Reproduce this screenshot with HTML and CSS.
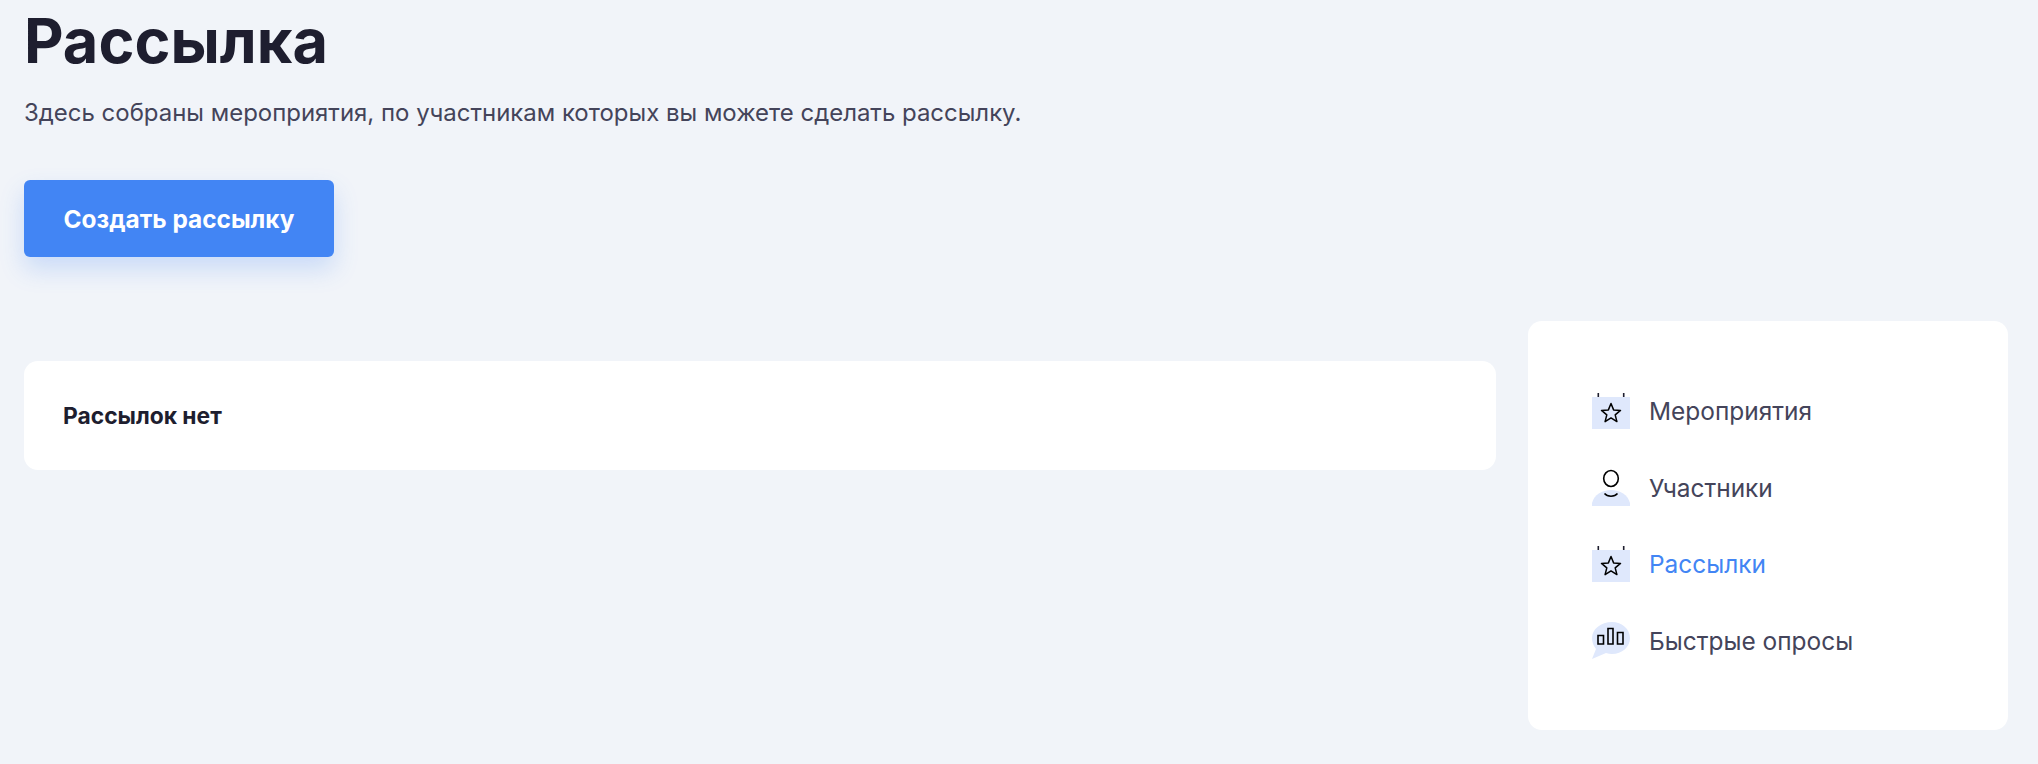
FILE: index.html
```html
<!DOCTYPE html>
<html lang="ru">
<head>
  <meta charset="UTF-8" />
  <title>Рассылка</title>
  <link rel="stylesheet" href="styles.css">
</head>
<body>

  <h1 class="titulo">Рассылка</h1>
  <p class="descripcion">Здесь собраны мероприятия, по участникам которых вы можете сделать рассылку.</p>
  <button class="boton">Создать рассылку</button>

  <div class="columnas">
    <div class="tarjeta">Рассылок нет</div>

    <nav class="menu">
      <a class="enlace">
        <svg class="icono" viewBox="0 0 38 38"><path d="M0 5h38v32H0z" fill="#dfe8fc"/><path d="M6.300 1v4M31.700 1v4" stroke="#1e1e2f" stroke-width="1.600"/><path d="M19 11.500l2.600 6.400 6.900.5-5.300 4.500 1.700 6.700-5.900-3.700-5.900 3.700 1.700-6.700-5.300-4.500 6.900-.5z" fill="none" stroke="#000" stroke-width="1.500" stroke-linejoin="round"/></svg>
        Мероприятия
      </a>
      <a class="enlace">
        <svg class="icono" viewBox="0 0 38 38"><path d="M0 37v-3C2 26 10 21 19 21s17 5 19 13v3z" fill="#dfe8fc"/><ellipse cx="19" cy="9.500" rx="7.300" ry="8" fill="#fff" stroke="#000" stroke-width="1.600"/><path d="M12.500 24.500c3 3.600 10 3.600 13 0" fill="none" stroke="#000" stroke-width="1.600"/></svg>
        Участники
      </a>
      <a class="enlace activo">
        <svg class="icono" viewBox="0 0 38 38"><path d="M0 5h38v32H0z" fill="#dfe8fc"/><path d="M6.300 1v4M31.700 1v4" stroke="#1e1e2f" stroke-width="1.600"/><path d="M19 11.500l2.600 6.400 6.900.5-5.300 4.500 1.700 6.700-5.900-3.700-5.900 3.700 1.700-6.700-5.300-4.500 6.900-.5z" fill="none" stroke="#000" stroke-width="1.500" stroke-linejoin="round"/></svg>
        Рассылки
      </a>
      <a class="enlace">
        <svg class="icono" viewBox="0 0 38 38"><path d="M20 0c10 0 18 7 18 16s-8 16-18 16c-2 0-4-.3-6-1L0 37l4-10C1.500 24 0 20 0 16 0 7 9 0 20 0z" fill="#dfe8fc"/><path d="M6 13.500h5.500v8.500H6zM16 6.500h5v15.500h-5zM25.500 10.500h5.500v11.500h-5.500z" fill="none" stroke="#000" stroke-width="1.600"/></svg>
        Быстрые опросы
      </a>
    </nav>
  </div>

</body>
</html>
```

FILE: styles.css
```css
* { box-sizing: border-box; margin: 0; padding: 0; }

html, body {
  height: 100%;
  overflow: hidden;
}

body {
  background-color: #f1f4f9;
  font-family: 'Inter', sans-serif;
  color: #1e1e2f;
  padding: 0 30px 0 24px;
}

.titulo {
  font-size: 61.200px;
  font-weight: 700;
  line-height: 82px;
}

.descripcion {
  margin-top: 13px;
  font-size: 23.960px;
  line-height: 36px;
  color: #44445a;
}

.boton {
  display: block;
  width: 310px;
  height: 77px;
  margin-top: 49px;
  background: #4285f4;
  border: none;
  border-radius: 6px;
  color: white;
  font-family: inherit;
  font-size: 24.400px;
  font-weight: 700;
  box-shadow: 0 12px 24px rgba(66, 133, 244, 0.22);
}

.columnas {
  display: flex;
  align-items: flex-start;
  gap: 32px;
  margin-top: 64px;
}

.tarjeta {
  flex: 1;
  margin-top: 40px;
  height: 109px;
  padding: 0 39px;
  display: flex;
  align-items: center;
  background: white;
  border-radius: 14px;
  font-size: 22.800px;
  font-weight: 700;
}

.menu {
  width: 480px;
  height: 409px;
  padding: 71px 64px;
  display: flex;
  flex-direction: column;
  gap: 38.500px;
  background: white;
  border-radius: 14px;
}

.enlace {
  display: flex;
  align-items: center;
  gap: 19px;
  height: 38px;
  font-size: 24.450px;
  color: #44445a;
}

.activo {
  color: #4285f4;
}

.icono {
  width: 38px;
  height: 38px;
  flex: none;
}
```
